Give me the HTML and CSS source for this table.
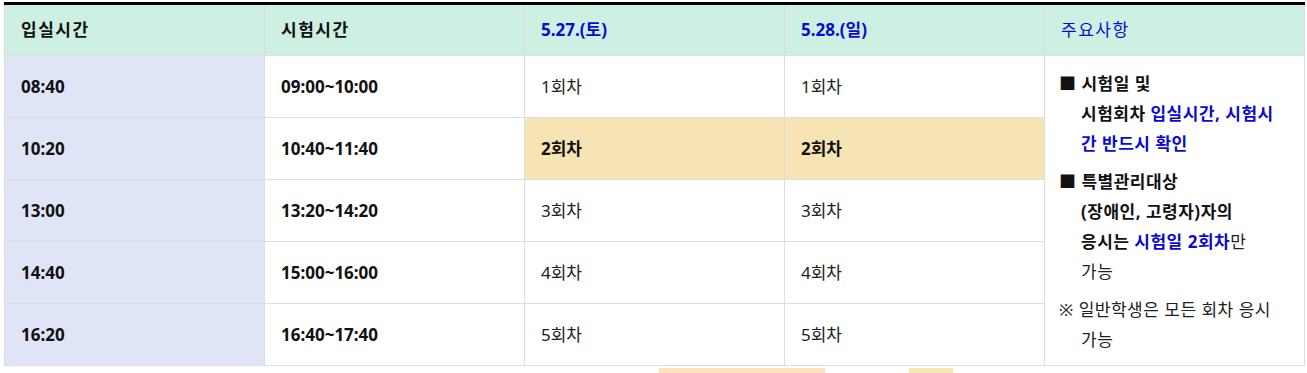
FILE: index.html
```html
<!DOCTYPE html>
<html lang="ko">
<head>
<meta charset="utf-8">
<link rel="stylesheet" href="styles.css">
</head>
<body>
<div class="wrap">
  <table class="schedule">
    <thead>
      <tr>
        <th><span class="ko">입실시간</span></th>
        <th><span class="ko">시험시간</span></th>
        <th class="blue">5.27.(토)</th>
        <th class="blue">5.28.(일)</th>
        <th class="blue light"><span class="ko">주요사항</span></th>
      </tr>
    </thead>
    <tbody>
      <tr>
        <td class="entry">08:40</td>
        <td class="time">09:00~10:00</td>
        <td>1회차</td>
        <td>1회차</td>
        <td class="notes" rowspan="5">
          <p class="note"><b>■ 시험일 및<br>시험회차 <span class="hl">입실시간, 시험시<br>간 반드시 확인</span></b></p>
          <p class="note"><b>■ 특별관리대상<br>(장애인, 고령자)자의<br>응시는 <span class="hl">시험일 2회차</span></b>만<br>가능</p>
          <p class="note">※ 일반학생은 모든 회차 응시<br>가능</p>
        </td>
      </tr>
      <tr>
        <td class="entry">10:20</td>
        <td class="time">10:40~11:40</td>
        <td class="pick">2회차</td>
        <td class="pick">2회차</td>
      </tr>
      <tr>
        <td class="entry">13:00</td>
        <td class="time">13:20~14:20</td>
        <td>3회차</td>
        <td>3회차</td>
      </tr>
      <tr>
        <td class="entry">14:40</td>
        <td class="time">15:00~16:00</td>
        <td>4회차</td>
        <td>4회차</td>
      </tr>
      <tr>
        <td class="entry">16:20</td>
        <td class="time">16:40~17:40</td>
        <td>5회차</td>
        <td>5회차</td>
      </tr>
    </tbody>
  </table>
  <div class="below">
    <span class="chip chip-a"></span>
    <span class="chip chip-b"></span>
  </div>
</div>
</body>
</html>
```

FILE: styles.css
```css
html, body {
  margin: 0;
  padding: 0;
  background: #ffffff;
}
body {
  font-family: "Noto Sans", "Noto Sans CJK KR", sans-serif;
  font-size: 17px;
  color: #111;
}
.wrap {
  padding: 2px 0 0 4px;
}
.schedule {
  border-collapse: collapse;
  table-layout: fixed;
  width: 1300px;
  border-top: 3px solid #000;
}
.schedule th,
.schedule td {
  border: 1px solid #dddddd;
  text-align: left;
  vertical-align: middle;
  padding: 0 16px;
  width: 260px;
  box-sizing: border-box;
  line-height: 24px;
}
.schedule th {
  height: 52px;
  background: #cdf0e2;
  font-weight: 700;
  color: #111;
  border-top: 0;
}
.ko {
  letter-spacing: 1.5px;
}
.schedule th.blue {
  color: #0a0ad0;
}
.schedule th.light {
  font-weight: 400;
}
.schedule td {
  height: 62px;
  color: #222;
}
.schedule td.entry {
  background: #dfe5f7;
  font-weight: 700;
  color: #111;
}
.schedule td.time {
  font-weight: 700;
  color: #111;
}
.schedule td.pick {
  background: #f6e4b4;
  font-weight: 700;
  color: #111;
}
.schedule td.notes {
  line-height: 30px;
  letter-spacing: 0.5px;
  padding: 6px 10px 4px 14px;
}
.note {
  margin: 0;
  padding-left: 22px;
  text-indent: -22px;
  white-space: nowrap;
}
.note + .note {
  margin-top: 8px;
}
.note b {
  color: #111;
}
.note .hl {
  color: #0a0ad0;
}
.below {
  display: flex;
  height: 8px;
  padding-left: 655px;
  padding-top: 2px;
}
.chip {
  display: block;
  height: 8px;
}
.chip-a {
  width: 166px;
  background: #fde3bf;
}
.chip-b {
  width: 44px;
  margin-left: 84px;
  background: #f6e7b5;
}
```
